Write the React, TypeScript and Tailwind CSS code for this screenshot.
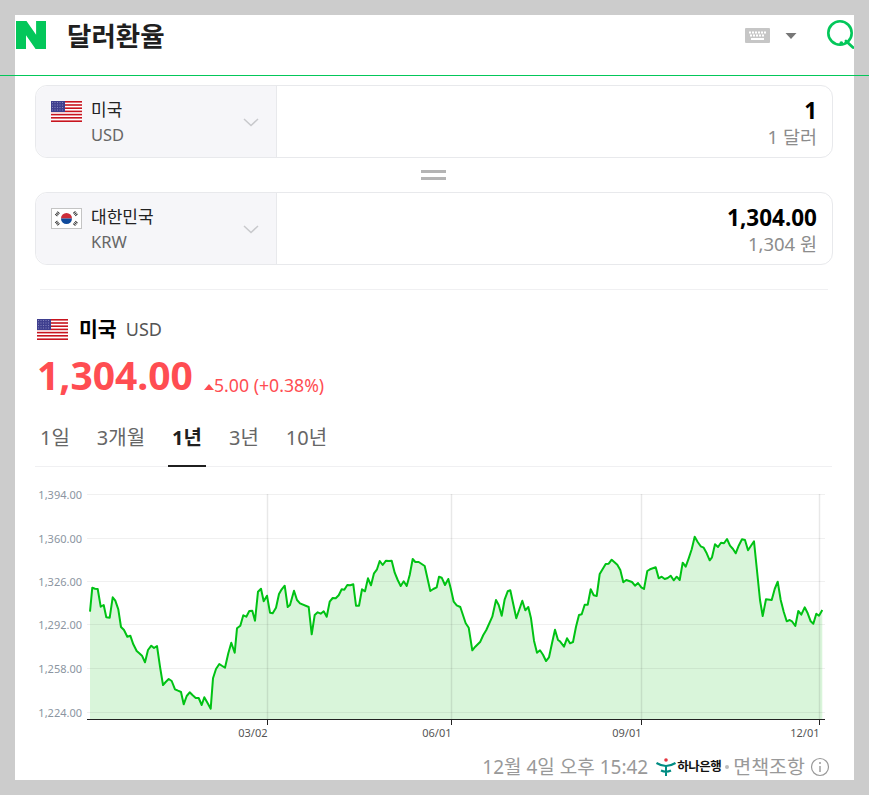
import React from 'react';

// traced from the picture: [zoomX, zoomY] in 3x crops
const seg1 = [[210,395],[217,323],[225,326],[233,327],[242,380],[251,375],[259,412],[269,413],[278,352],[286,362],[295,388],[303,441],[312,450],[322,470],[331,467],[340,493],[350,513],[358,520],[366,527],[375,547],[384,510],[394,497],[402,504],[411,498],[420,560],[429,615],[437,606],[446,597],[455,603],[465,628],[474,632],[483,636],[491,673],[500,648],[509,637],[518,646],[527,654],[536,654],[545,675],[553,652],[563,670],[572,686],[579,595],[588,567],[598,552],[607,558],[615,563],[625,520],[634,488],[644,518],[651,445],[661,437],[670,406],[679,410],[688,393],[697,392],[705,422],[714,335],[723,326],[731,364],[741,347],[750,398],[758,400],[768,383],[777,342],[785,328],[794,317],[803,381]];
const seg2 = [[0,375],[12,332],[21,360],[30,370],[56,381],[65,463],[74,405],[83,397],[92,401],[101,394],[110,410],[119,365],[128,354],[137,355],[146,346],[155,328],[163,329],[172,315],[181,316],[190,313],[198,377],[207,377],[216,328],[225,334],[234,295],[243,316],[252,280],[261,268],[269,243],[278,255],[288,242],[297,243],[305,242],[314,278],[323,300],[332,318],[341,304],[350,318],[359,285],[368,237],[376,246],[386,246],[395,252],[404,258],[421,333],[430,327],[440,322],[447,290],[455,293],[465,315],[475,297],[482,325],[491,365],[500,376],[511,381],[527,430],[536,443],[547,511],[556,500],[571,485],[580,465],[589,450],[607,410],[618,360],[626,375],[635,407],[644,358],[653,334],[661,331],[679,415],[697,362],[706,391],[715,381],[723,415],[732,482],[741,518],[750,511],[759,524],[768,543],[777,532],[786,490],[795,449],[804,480]];
const seg3 = [[0,484],[12,500],[21,475],[30,490],[39,486],[48,440],[57,405],[65,403],[74,374],[83,374],[92,328],[101,346],[110,348],[119,282],[137,252],[146,251],[155,239],[172,254],[181,270],[190,307],[199,300],[216,306],[225,317],[234,309],[244,322],[252,327],[262,273],[270,268],[287,262],[296,295],[305,290],[314,297],[323,294],[332,287],[341,301],[350,290],[359,300],[368,248],[377,260],[386,235],[395,208],[404,170],[413,186],[422,199],[431,203],[440,220],[449,241],[456,232],[465,193],[474,201],[483,188],[492,190],[501,177],[510,197],[519,207],[527,220],[536,197],[546,178],[555,180],[564,211],[582,184],[600,360],[608,408],[618,358],[635,360],[644,327],[653,305],[662,360],[671,395],[680,424],[689,420],[697,425],[706,438],[715,393],[724,404],[734,382],[743,400],[752,424],[760,431],[769,401],[777,407],[787,390]];

// chart svg starts at page (35, 485)
const toPage = (s: number[][], ox: number) => s.map(([x, y]) => [ox + x / 3 - 35, 480 + y / 3 - 485]);
const points = [...toPage(seg1, 20), ...toPage(seg2, 290), ...toPage(seg3, 560)];
const linePath = points.map(([x, y]) => `${x.toFixed(1)},${y.toFixed(1)}`).join(' ');
const areaPath = `${linePath} 787.3,234 55.0,234`;

const yTicks = [
  { y: 9.5, label: '1,394.00' },
  { y: 53.5, label: '1,360.00' },
  { y: 96.5, label: '1,326.00' },
  { y: 139.5, label: '1,292.00' },
  { y: 183.5, label: '1,258.00' },
  { y: 227.5, label: '1,224.00' },
];
const xTicks = [
  { x: 232.5, label: '03/02' },
  { x: 416.5, label: '06/01' },
  { x: 606.5, label: '09/01' },
  { x: 784.5, label: '12/01' },
];

const UsFlag = () => (
  <svg width="31" height="21" viewBox="0 0 31 21" className="shrink-0">
    <rect width="31" height="21" fill="#fff" />
    {[0, 3.2, 6.4, 9.6, 12.8, 16, 19.4].map((y) => (
      <rect key={y} y={y} width="31" height="1.6" fill="#c8141f" />
    ))}
    <rect width="14" height="11" fill="#3f3f8f" />
    {[1.5, 4, 6.5, 9].map((y) =>
      [1.5, 4, 6.5, 9, 11.5].map((x) => <rect key={`${x}-${y}`} x={x - 0.5} y={y - 0.5} width="1" height="1" fill="#8484bc" />),
    )}
  </svg>
);

const KrFlag = () => (
  <svg width="31" height="21" viewBox="0 0 31 21" className="shrink-0">
    <rect x="0.5" y="0.5" width="30" height="20" fill="#fff" stroke="#c4c4c4" />
    <path d="M10 10.5a5.5 5.5 0 0 1 11 0z" fill="#cd2e3a" />
    <path d="M10 10.5a5.5 5.5 0 0 0 11 0z" fill="#0f4a9c" />
    <g stroke="#333" strokeWidth="3" strokeDasharray="1 0.6">
      <path d="M5 7.5l3-3.5" />
      <path d="M23 4l3 3.5" />
      <path d="M5 13.5l3 3.5" />
      <path d="M23 17l3-3.5" />
    </g>
  </svg>
);

const Chevron = () => (
  <svg width="16" height="9" viewBox="0 0 16 9" className="shrink-0">
    <path d="M1 1l7 6.5L15 1" fill="none" stroke="#c8c9cc" strokeWidth="1.5" />
  </svg>
);

const CurrencyCard = ({ flag, name, code, value, sub }: { flag: React.ReactNode; name: string; code: string; value: string; sub: string }) => (
  <div className="flex h-[73px] w-[798px] rounded-[12px] border border-[#e8e9ec]">
    <div className="flex w-[241px] shrink-0 rounded-l-[12px] border-r border-[#e8e9ec] bg-[#f6f6f9] pl-[15px] pr-[17px]">
      <div className="pt-[15px]">{flag}</div>
      <div className="ml-[9px] pt-[12px]">
        <div className="text-[17px] leading-[24px] text-[#222]">{name}</div>
        <div className="text-[16.5px] leading-[26px] text-[#666]">{code}</div>
      </div>
      <div className="ml-auto pt-[32px]">
        <Chevron />
      </div>
    </div>
    <div className="flex-1 pr-[15px] pt-[9px] text-right">
      <div className="text-[22.5px] font-bold leading-[32px] text-black">{value}</div>
      <div className="text-[18.5px] leading-[20px] text-[#8c8c8c]">{sub}</div>
    </div>
  </div>
);

const tabs = ['1일', '3개월', '1년', '3년', '10년'];

export default function App() {
  return (
    <div className="h-[795px] w-[869px] overflow-hidden bg-[#cccccc] pt-[15px] font-['Noto_Sans','Noto_Sans_CJK_KR',sans-serif]">
      <div className="ml-[15px] h-[765px] w-[839px] bg-white">
        {/* header */}
        <div className="flex h-[60px] items-start">
          <svg width="31" height="28" viewBox="0 0 31 28" className="ml-px mt-[6px] shrink-0">
            <path d="M0 0h10.5l9.6 13.8V0H30v28H19.6L10 14.2V28H0z" fill="#03c75a" />
          </svg>
          <h1 className="ml-[20px] mt-[3px] text-[26.5px] font-bold leading-[36px] text-[#1f1f1f]">달러환율</h1>
          <svg width="25" height="15" viewBox="0 0 25 15" className="ml-auto mt-[13px] shrink-0">
            <rect width="25" height="15" rx="1" fill="#c6c6c6" />
            <g fill="#fff">
              {[4, 7, 10, 13, 16, 19].map((x) => (
                <rect key={x} x={x} y="3.5" width="2" height="2" />
              ))}
              {[5, 8, 11, 14, 17].map((x) => (
                <rect key={x} x={x} y="6.5" width="2" height="2" />
              ))}
              <rect x="6" y="10" width="13" height="2" />
            </g>
          </svg>
          <svg width="12" height="8" viewBox="0 0 12 8" className="ml-[15px] mt-[17px] shrink-0">
            <path d="M0.5 1h11L6 7z" fill="#777" />
          </svg>
          <svg width="30" height="30" viewBox="0 0 30 30" className="ml-[27px] mt-[5px] shrink-0">
            <circle cx="16" cy="13" r="11.7" fill="none" stroke="#03c75a" strokeWidth="2.6" />
            <circle cx="17.3" cy="23.2" r="1.9" fill="#03c75a" />
            <path d="M22 21l7 6.5" stroke="#03c75a" strokeWidth="2.8" strokeLinecap="round" />
          </svg>
        </div>
        {/* rule runs past the white panel onto the grey */}
        <div className="-ml-[15px] h-px w-[869px] bg-[#03c75a]" />

        <div className="pl-[20px] pt-[9px]">
          <CurrencyCard flag={<UsFlag />} name="미국" code="USD" value="1" sub="1 달러" />

          <div className="flex h-[34px] flex-col items-center justify-center gap-[4px] pr-[23px]">
            <div className="h-[3px] w-[25px] bg-[#b4b4b4]" />
            <div className="h-[3px] w-[25px] bg-[#b4b4b4]" />
          </div>

          <CurrencyCard flag={<KrFlag />} name="대한민국" code="KRW" value="1,304.00" sub="1,304 원" />

          <div className="ml-[5px] mt-[24px] h-px w-[788px] bg-[#f0f0f2]" />

          <div className="ml-[2px] mt-[28px] flex h-[22px] items-center">
            <UsFlag />
            <span className="ml-[11px] text-[20.5px] font-bold text-black">미국</span>
            <span className="ml-[9px] text-[18px] text-[#555]">USD</span>
          </div>

          <div className="ml-[2px] mt-[12px] flex h-[46px] items-center text-[#ff4d52]">
            <span className="text-[39px] font-bold leading-[46px]">1,304.00</span>
            <svg width="10" height="6" viewBox="0 0 10 6" className="ml-[11px] mt-[24px] shrink-0">
              <path d="M5 0l5 6H0z" fill="#ff4d52" />
            </svg>
            <span className="mt-[20px] text-[17.7px] leading-[24px]">5.00 (+0.38%)</span>
          </div>

          <div className="mt-[21px] flex h-[48px] w-[797px] gap-[19px] border-b border-[#f0f0f2] pl-px">
            {tabs.map((t) => (
              <div
                key={t}
                className={
                  t === '1년'
                    ? 'h-[48px] border-b-2 border-[#1f1f1f] px-[4px] pt-[6px] text-[20px] font-bold leading-[26px] text-[#1f1f1f]'
                    : 'px-[4px] pt-[6px] text-[20px] leading-[26px] text-[#666]'
                }
              >
                {t}
              </div>
            ))}
          </div>

          {/* chart */}
          <svg width="800" height="260" viewBox="0 0 800 260" className="mt-[18px] block">
            <polygon points={areaPath} fill="#d9f5da" />
            {yTicks.map((t) => (
              <g key={t.label}>
                <line x1="52" x2="790" y1={t.y} y2={t.y} stroke="#000" strokeOpacity="0.06" strokeWidth="1.2" />
                <text x="47" y={t.y + 4} textAnchor="end" fontSize="11" fill="#8b95a1">
                  {t.label}
                </text>
              </g>
            ))}
            {xTicks.map((t) => (
              <g key={t.label}>
                <line x1={t.x} x2={t.x} y1="9" y2="234" stroke="#000" strokeOpacity="0.09" strokeWidth="1.5" />
                <line x1={t.x} x2={t.x} y1="234" y2="240" stroke="#222" />
                <text x={t.x} y="252" textAnchor="end" fontSize="11" fill="#555">
                  {t.label}
                </text>
              </g>
            ))}
            <line x1="52" x2="790" y1="234.5" y2="234.5" stroke="#222" />
            <polyline points={linePath} fill="none" stroke="#00c214" strokeWidth="2" strokeLinejoin="round" />
          </svg>

          {/* footer */}
          <div className="mt-[10px] flex h-[24px] w-[795px] items-center justify-end text-[19px] leading-[24px] text-[#999]">
            <span>12월 4일 오후 15:42</span>
            <svg width="20" height="18" viewBox="0 0 20 18" className="ml-[8px] shrink-0">
              <circle cx="10" cy="2" r="1.8" fill="#e5353f" />
              <path d="M0.5 5Q10 11 19.5 5" fill="none" stroke="#008c82" strokeWidth="2.2" />
              <path d="M10 8v10M5 12.5c3 1.5 7 1.5 10 0" fill="none" stroke="#008c82" strokeWidth="2" />
            </svg>
            <span className="ml-[1px] text-[12.5px] font-bold tracking-[-0.5px] text-[#111]">하나은행</span>
            <span className="mx-[4px] h-[4px] w-[4px] rounded-full bg-[#bbb]" />
            <span className="text-[19.5px]">면책조항</span>
            <svg width="20" height="20" viewBox="0 0 20 20" className="ml-[5px] shrink-0">
              <circle cx="10" cy="10" r="8.5" fill="none" stroke="#999" strokeWidth="1.2" />
              <circle cx="10" cy="6" r="1" fill="#999" />
              <path d="M10 9v6" stroke="#999" strokeWidth="1.4" />
            </svg>
          </div>
        </div>
      </div>
    </div>
  );
}
